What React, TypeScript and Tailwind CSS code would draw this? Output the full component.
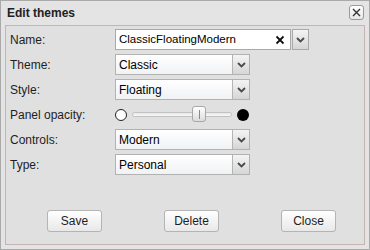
import React from 'react';

function Chevron() {
  return (
    <svg width="9" height="6" viewBox="0 0 9 6" className="block">
      <path d="M1 1 L4.5 4.5 L8 1" fill="none" stroke="#4a4a4a" strokeWidth="1.8" />
    </svg>
  );
}

function ArrowButton({ separate }: { separate?: boolean }) {
  return (
    <div
      className={
        'flex h-full w-[17px] items-center justify-center bg-gradient-to-b from-[#f4f4f4] to-[#d6d6d6] ' +
        (separate ? 'border border-[#a9a9a9]' : 'border-l border-[#b4b4b4]')
      }
    >
      <Chevron />
    </div>
  );
}

function Select({ value }: { value: string }) {
  return (
    <div className="flex h-[21px] w-[135px] border border-[#b2b2b2] bg-gradient-to-b from-white to-[#f0f2f4]">
      <div className="flex flex-1 items-center pl-[3px] text-[12px] text-black">{value}</div>
      <ArrowButton />
    </div>
  );
}

function Row({ label, children }: { label: string; children: React.ReactNode }) {
  return (
    <div className="flex h-[21px] items-center">
      <div className="w-[105px] text-[12px] text-[#1e1e1e]">{label}</div>
      {children}
    </div>
  );
}

function Button({ label }: { label: string }) {
  return (
    <div className="flex h-[22px] w-[55px] items-center justify-center rounded-[3px] border border-[#b4b4b4] bg-gradient-to-b from-white to-[#e8e8e8] text-[12px] text-[#1e1e1e]">
      {label}
    </div>
  );
}

export default function App() {
  return (
    <div
      className="flex h-[250px] w-[370px] flex-col border border-[#aaaaaa] bg-[#e4e4e4]"
      style={{ fontFamily: '"Liberation Sans", Arial, sans-serif' }}
    >
      <div className="flex h-[24px] items-start justify-between pl-[6px] pr-[5px] pt-[4px]">
        <div className="text-[12px] font-bold leading-[16px] text-[#222]">Edit themes</div>
        <div className="flex h-[15px] w-[15px] items-center justify-center rounded-[3px] border border-[#9a9a9a] bg-gradient-to-b from-white to-[#e6e6e6]">
          <svg width="9" height="9" viewBox="0 0 9 9">
            <path d="M1 1 L8 8 M8 1 L1 8" stroke="#333" strokeWidth="1.4" />
          </svg>
        </div>
      </div>

      <div className="mx-[4px] flex h-[220px] flex-col border border-[#c4b4b4] bg-[#e0e0e0] pl-[4px] pt-[3px]">
        <div className="flex flex-col gap-[4px]">
          <Row label="Name:">
            <div className="flex h-[21px] gap-[1px]">
              <div className="flex w-[176px] items-center justify-between border border-[#a9a9a9] bg-white pl-[3px] pr-[5px] text-[11.5px] text-black">
                <span>ClassicFloatingModern</span>
                <svg width="10" height="10" viewBox="0 0 10 10">
                  <path d="M1.5 1.5 L8.5 8.5 M8.5 1.5 L1.5 8.5" stroke="#111" strokeWidth="1.8" />
                </svg>
              </div>
              <ArrowButton separate />
            </div>
          </Row>
          <Row label="Theme:">
            <Select value="Classic" />
          </Row>
          <Row label="Style:">
            <Select value="Floating" />
          </Row>
          <Row label="Panel opacity:">
            <div className="flex w-[135px] items-center">
              <div className="h-[12px] w-[12px] rounded-full border-[1.5px] border-[#222] bg-white" />
              <div className="relative ml-[5px] h-[5px] w-[100px] rounded-full border border-[#c2c2c2] bg-gradient-to-b from-[#e8e8e8] to-[#f8f8f8]">
                <div className="absolute left-[59px] top-[-7px] flex h-[16px] w-[14px] items-center justify-center rounded-[3px] border border-[#a8a8a8] bg-gradient-to-b from-white to-[#dcdcdc]">
                  <div className="h-[9px] w-[1px] bg-[#888]" />
                </div>
              </div>
              <div className="ml-[5px] h-[12px] w-[12px] rounded-full bg-black" />
            </div>
          </Row>
          <Row label="Controls:">
            <Select value="Modern" />
          </Row>
          <Row label="Type:">
            <Select value="Personal" />
          </Row>
        </div>

        <div className="mt-auto mb-[12px] flex gap-[62px] pl-[37px]">
          <Button label="Save" />
          <Button label="Delete" />
          <Button label="Close" />
        </div>
      </div>
    </div>
  );
}
